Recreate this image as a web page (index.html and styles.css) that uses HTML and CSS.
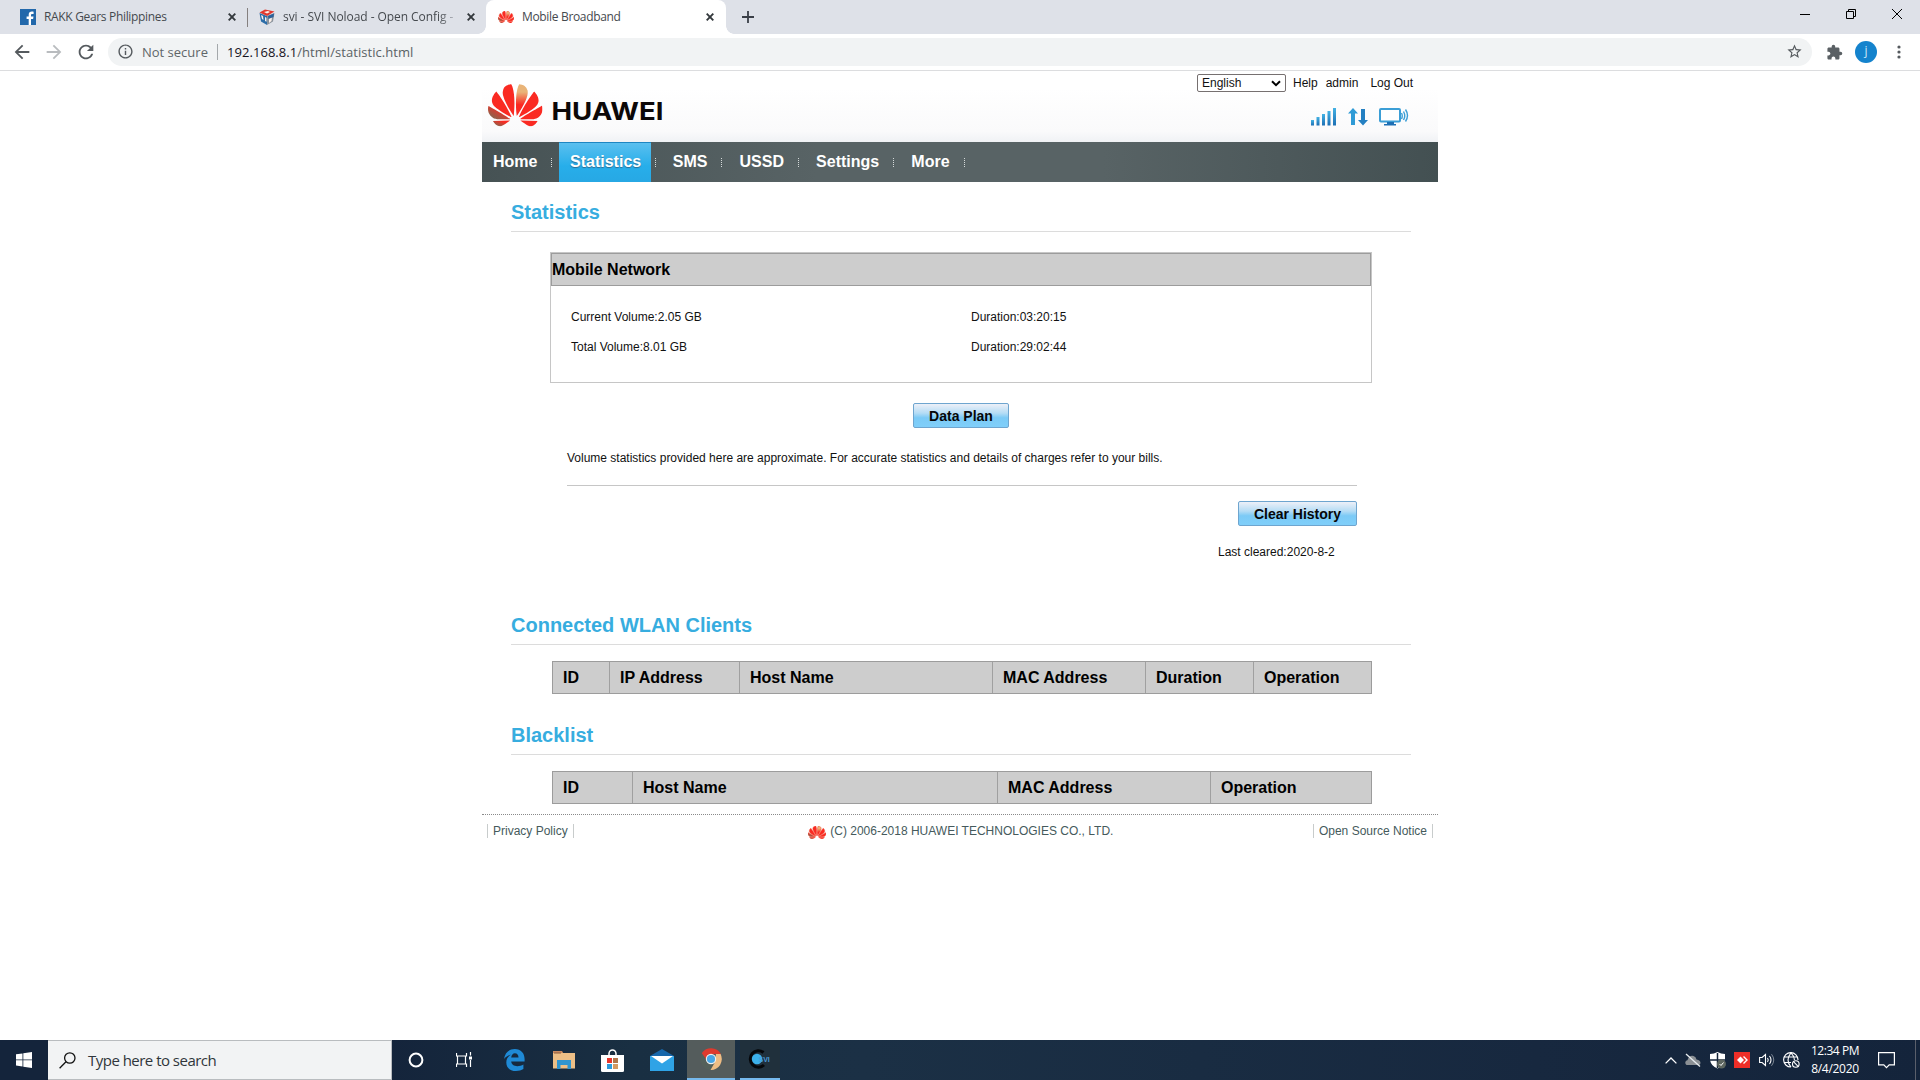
FILE: index.html
```html
<!DOCTYPE html>
<html lang="en">
<head>
<meta charset="utf-8">
<title>Mobile Broadband</title>
<link rel="stylesheet" href="styles.css">
</head>
<body>
<svg class="defs" width="0" height="0" aria-hidden="true">
  <defs>
    <linearGradient id="tan" x1="0" y1="0" x2="0" y2="1"><stop offset=".25" stop-color="#e9b478"/><stop offset=".65" stop-color="#fa2a22"/></linearGradient>
    <linearGradient id="brown" x1="0" y1="1" x2="1" y2="0"><stop offset=".2" stop-color="#93604a"/><stop offset=".7" stop-color="#fa2a22"/></linearGradient>
    <linearGradient id="blue" x1="0" y1="0" x2="0" y2="1"><stop offset="0" stop-color="#43b2e4"/><stop offset="1" stop-color="#1d6fb4"/></linearGradient>
    <symbol id="flower" viewBox="0 2.9 24 18.2" preserveAspectRatio="none">
      <g fill="#fa2a22">
        <path d="M3.67 6.14S1.82 7.91 1.72 9.78v.35c.08 1.51 1.22 2.4 1.22 2.4 1.83 1.79 6.26 4.04 7.3 4.55 0 0 .06.03.1-.01l.02-.04v-.04C7.52 10.8 3.67 6.14 3.67 6.14z"/>
        <path fill="url(#brown)" d="M9.65 18.6c-.02-.08-.1-.08-.1-.08l-7.38.26c.8 1.43 2.15 2.53 3.56 2.2.96-.25 3.16-1.78 3.88-2.3.06-.05.04-.09.04-.09z"/>
        <path fill="url(#brown)" d="M9.73 17.82C6.49 15.63.21 12.28.21 12.28c-.15.46-.2.9-.21 1.3v.07c0 1.07.4 1.82.4 1.82.8 1.69 2.34 2.2 2.34 2.2.7.3 1.4.31 1.4.31.12.02 4.4 0 5.54 0 .05 0 .08-.05.08-.05v-.06c0-.03-.03-.05-.03-.05z"/>
        <path d="M9.06 3.19a3.42 3.42 0 00-2.57 3.15v.41c.03.6.16 1.05.16 1.05.66 2.9 3.86 7.65 4.55 8.65.05.05.1.03.1.03a.1.1 0 00.06-.1c1.06-10.6-1.11-13.42-1.11-13.42-.32.02-1.19.23-1.19.23z"/>
        <path fill="url(#tan)" d="M17.36 5.46s-.49-1.8-2.44-2.28c0 0-.57-.14-1.17-.22 0 0-2.18 2.81-1.12 13.43.01.07.06.08.06.08.07.03.1-.03.1-.03.72-1.03 3.9-5.76 4.55-8.64 0 0 .36-1.4.02-2.34z"/>
        <path d="M14.44 18.53s-.07 0-.09.05c0 0-.01.07.03.1.7.51 2.85 2 3.88 2.3 0 0 .16.05.43.06h.14c.69-.02 1.9-.37 3-2.26l-7.4-.25z"/>
        <path d="M22.27 10.12c.14-2.06-1.94-3.97-1.94-3.98 0 0-3.85 4.66-6.67 10.8 0 0-.03.08.02.13l.04.01h.06c1.06-.53 5.46-2.77 7.28-4.54 0 0 1.15-.93 1.21-2.42z"/>
        <path d="M23.79 12.26s-6.28 3.37-9.52 5.55c0 0-.05.04-.03.11 0 0 .03.06.07.06 1.16 0 5.56 0 5.67-.02 0 0 .57-.02 1.27-.29 0 0 1.56-.5 2.37-2.27 0 0 .73-1.45.17-3.14z"/>
      </g>
    </symbol>
    <symbol id="close" viewBox="0 0 8 8"><path d="M.7.7l6.6 6.6M7.3.7L.7 7.3" stroke="#33383c" stroke-width="1.9"/></symbol>
  </defs>
</svg>

<div class="tabstrip">
  <div class="tab tab-first">
    <svg class="favicon" viewBox="0 0 16 16"><rect width="16" height="16" fill="#2268ab"/><path d="M11 16v-6h2.1l.4-2.4H11V6.2c0-.8.4-1.3 1.3-1.3h1.3V2.7c-.4-.1-1-.1-1.7-.1-2 0-3.2 1.1-3.2 3.2v1.8H6.6V10h2.1v6z" fill="#fff"/></svg>
    <span class="tab-title title-rakk">RAKK Gears Philippines</span>
    <svg class="tab-close"><use href="#close"/></svg>
  </div>
  <div class="tab tab-second">
    <svg class="favicon" viewBox="0 0 16 16"><path d="M.5 4L8 7v9l-6-3.500z" fill="#2c6da8"/><path d="M15.500 4L8 7v9l6-3.500z" fill="#8b939c"/><path d="M.5 3.500L6 .5l9.500 2L8 7z" fill="#e2382d"/><path d="M5 3l4-1 2 1-3 1.500zM2 6l2 1 .5 4L3 10zM6 8l1.500.8v4L6 12zM10 9l3-1-.5 4-2.500 2z" fill="#fbefe8"/><path d="M9 7l6-2.500-.5 3.500L9.500 10z" fill="#2c6099"/></svg>
    <span class="tab-title title-svi">svi - SVI Noload - Open Config -</span>
    <svg class="tab-close"><use href="#close"/></svg>
  </div>
  <div class="tab tab-active">
    <svg class="favicon fav-huawei small-flower"><use href="#flower"/></svg>
    <span class="tab-title title-mobile">Mobile Broadband</span>
    <svg class="tab-close"><use href="#close"/></svg>
  </div>
  <svg class="new-tab" viewBox="0 0 12 12"><path d="M6 0v12M0 6h12" stroke="#3a3f47" stroke-width="1.8"/></svg>
  <div class="window-controls">
    <svg viewBox="0 0 10 10"><path d="M0 5.500h10" stroke="#000"/></svg>
    <svg viewBox="0 0 10 10"><path d="M.5 2.500h7v7h-7zM2.500 2.500v-2h7v7h-2" fill="none" stroke="#000"/></svg>
    <svg viewBox="0 0 10 10"><path d="M0 0l10 10M10 0L0 10" stroke="#000"/></svg>
  </div>
</div>

<div class="toolbar">
  <svg class="nav-icon" viewBox="0 0 24 24"><path fill="#555a5e" d="M20 11H7.830l5.590-5.590L12 4l-8 8 8 8 1.410-1.410L7.830 13H20z"/></svg>
  <svg class="nav-icon" viewBox="0 0 24 24"><path fill="#b9bcbf" d="M4 11h12.170l-5.590-5.590L12 4l8 8-8 8-1.410-1.410L16.170 13H4z"/></svg>
  <svg class="nav-icon" viewBox="0 0 24 24"><path fill="#555a5e" d="M17.65 6.35C16.2 4.9 14.21 4 12 4c-4.42 0-7.99 3.58-7.99 8s3.57 8 7.99 8c3.73 0 6.84-2.55 7.73-6h-2.080c-.82 2.330-3.040 4-5.650 4-3.310 0-6-2.690-6-6s2.690-6 6-6c1.660 0 3.140.69 4.220 1.780L13 11h7V4l-2.350 2.350z"/></svg>
  <div class="omnibox">
    <svg class="info" viewBox="0 0 24 24"><path fill="#555a5e" d="M11 7h2v2h-2zm0 4h2v6h-2zm1-9C6.480 2 2 6.480 2 12s4.480 10 10 10 10-4.480 10-10S17.520 2 12 2zm0 18c-4.410 0-8-3.590-8-8s3.590-8 8-8 8 3.590 8 8-3.590 8-8 8z"/></svg>
    <span class="not-secure">Not secure</span>
    <span class="url"><span class="host">192.168.8.1</span>/html/statistic.html</span>
    <svg class="star" viewBox="0 0 24 24"><path fill="#555a5e" d="M22 9.240l-7.190-.62L12 2 9.190 8.630 2 9.240l5.460 4.730L5.820 21 12 17.270 18.180 21l-1.630-7.030L22 9.240zM12 15.400l-3.760 2.270 1-4.280-3.320-2.880 4.380-.38L12 6.100l1.710 4.040 4.380.38-3.320 2.880 1 4.280L12 15.400z"/></svg>
  </div>
  <svg class="puzzle" viewBox="0 0 24 24"><path fill="#5a6064" d="M20.500 11H19V7c0-1.100-.9-2-2-2h-4V3.500a2.500 2.500 0 0 0-5 0V5H4c-1.100 0-1.990.9-1.990 2v3.800H3.500c1.490 0 2.700 1.210 2.700 2.700s-1.210 2.700-2.700 2.700H2V20c0 1.100.9 2 2 2h3.800v-1.500c0-1.490 1.210-2.700 2.700-2.700 1.490 0 2.700 1.210 2.700 2.700V22H17c1.100 0 2-.9 2-2v-4h1.500a2.500 2.500 0 0 0 0-5z"/></svg>
  <span class="avatar">j</span>
  <svg class="kebab" viewBox="0 0 4 14"><g fill="#555a5e"><circle cx="2" cy="2" r="1.600"/><circle cx="2" cy="7" r="1.600"/><circle cx="2" cy="12" r="1.600"/></g></svg>
</div>

<main class="page">
  <header class="banner">
    <svg class="logo" viewBox="0 0 180 44">
      <use href="#flower" width="54.500" height="42.500"/>
      <text x="63.500" y="35.500" textLength="112" lengthAdjust="spacingAndGlyphs">HUAWEI</text>
    </svg>
    <div class="banner-right">
      <div class="top-links">
        <span class="lang">English<svg viewBox="0 0 10 7"><path d="M1 1.200l4 4 4-4" fill="none" stroke="#000" stroke-width="2"/></svg></span>
        <a class="help">Help</a><a class="admin">admin</a><a>Log Out</a>
      </div>
      <div class="status">
        <svg width="26" height="18" viewBox="0 0 26 18"><g fill="url(#blue)"><rect x="0" y="12" width="3" height="5.500"/><rect x="5.500" y="9" width="3" height="8.500"/><rect x="11" y="6" width="3" height="11.500"/><rect x="16.500" y="3" width="3" height="14.500"/><rect x="22" y="0" width="3" height="17.500"/></g></svg>
        <svg width="20" height="18" viewBox="0 0 20 18"><path fill="#2f9bd6" d="M5 0l5 5.500H7V17H3V5.500H0z"/><path fill="#2480c2" d="M15 17.500l-5-5.500h3V1h4v11h3z"/></svg>
        <svg width="30" height="18" viewBox="0 0 30 18"><rect x="1" y="1" width="20" height="12.500" rx="1" fill="#fff" stroke="#3b9ed6" stroke-width="2"/><path d="M8 14h7v2H8zM5 16h12v1.600H5z" fill="#1d6fb4"/><path d="M22.500 5q1.500 3 0 6M24.500 3.500q2.500 4.500 0 8.500M26.500 1.500q4 6 0 12" fill="none" stroke="#3b9ed6" stroke-width="1.400"/></svg>
      </div>
    </div>
  </header>

  <nav class="menu">
    <a>Home</a><i></i><a class="current">Statistics</a><i></i><a>SMS</a><i></i><a>USSD</a><i></i><a>Settings</a><i></i><a>More</a><i></i>
  </nav>

  <section class="section">
    <h2>Statistics</h2>
    <div class="panel">
      <h3>Mobile Network</h3>
      <div class="volumes">
        <span>Current Volume:2.05 GB</span><span>Duration:03:20:15</span>
        <span>Total Volume:8.01 GB</span><span>Duration:29:02:44</span>
      </div>
    </div>
    <div class="plan"><button class="btn btn-plan">Data Plan</button></div>
    <p class="note">Volume statistics provided here are approximate. For accurate statistics and details of charges refer to your bills.</p>
    <div class="clear"><button class="btn btn-clear">Clear History</button></div>
    <p class="cleared">Last cleared:2020-8-2</p>
  </section>

  <section class="section clients">
    <h2>Connected WLAN Clients</h2>
    <div class="thead thead-clients"><b>ID</b><b>IP Address</b><b>Host Name</b><b>MAC Address</b><b>Duration</b><b>Operation</b></div>
  </section>

  <section class="section blacklist">
    <h2>Blacklist</h2>
    <div class="thead thead-blacklist"><b>ID</b><b>Host Name</b><b>MAC Address</b><b>Operation</b></div>
  </section>

  <footer class="footer">
    <a class="foot-link">Privacy Policy</a>
    <span class="copyright"><svg class="small-flower"><use href="#flower"/></svg>(C) 2006-2018 HUAWEI TECHNOLOGIES CO., LTD.</span>
    <a class="foot-link">Open Source Notice</a>
  </footer>
</main>

<div class="taskbar">
  <div class="start"><svg width="16" height="16" viewBox="0 0 16 16"><path fill="#fff" d="M0 2.300L6.500 1.400v6.100H0zM7.300 1.300L16 0v7.500H7.300zM0 8.300h6.500v6.200L0 13.600zM7.300 8.300H16V16l-8.700-1.300z"/></svg></div>
  <div class="search">
    <svg width="17" height="17" viewBox="0 0 17 17"><circle cx="10.800" cy="6" r="5.200" fill="none" stroke="#111" stroke-width="1.300"/><path d="M7 9.800L.6 16.200" stroke="#111" stroke-width="1.300"/></svg>
    <span>Type here to search</span>
  </div>
  <div class="task"><svg width="16" height="16" viewBox="0 0 16 16"><circle cx="8" cy="8" r="6.400" fill="none" stroke="#fff" stroke-width="2"/></svg></div>
  <div class="task"><svg width="17" height="16" viewBox="0 0 17 16"><path d="M.5 1v3h10V1M.5 15v-3h10v3M1.500 4v8M9.500 4v8M14.500 0v3.500M14.500 8v7" fill="none" stroke="#fff" stroke-width="1.200"/><rect x="13" y="4.500" width="3" height="3" fill="#fff"/></svg></div>
  <div class="task app edge"><svg width="21" height="22" viewBox="0 0 21 22"><path fill="#1f8ad6" d="M0 10C1 3.500 5.500 0 10.800 0 17 0 20.600 4.400 20.600 10v2.600H7.200c.2 3.200 2.900 4.600 6 4.600 2.500 0 4.400-.7 6.200-1.700v4.600C17.400 21.300 15 22 12 22 6.300 22 2.300 18.700 2.300 13.400c0-3.300 1.700-6 4.600-7.600C4.400 6.300 1.800 7.500 0 10zm7.200-1.500h7.300c0-2.700-1.300-4.300-3.600-4.300-2 0-3.400 1.700-3.700 4.300z"/></svg></div>
  <div class="task app"><svg width="22" height="18" viewBox="0 0 22 18"><path fill="#c98a60" d="M0 0h9l1.500 2.500H0z"/><path fill="#edbf86" d="M0 2h22v15.500H0z"/><path fill="#2f95d0" d="M4 9h14v9h-3.500v-4h-7v4H4z"/><path fill="#8a5a3a" d="M1 1.500h7v1H1z"/></svg></div>
  <div class="task app"><svg width="23" height="23" viewBox="0 0 23 23"><path d="M8 7V4.500a3.500 3.500 0 0 1 7 0V7" fill="none" stroke="#fff" stroke-width="1.500"/><path d="M0 6h23v15.500q0 1.500-1.500 1.500h-20Q0 23 0 21.500z" fill="#fff"/><path fill="#e8352b" d="M6 9h5v5H6z"/><path fill="#b0764a" d="M12 9h5v5h-5z"/><path fill="#2d9bdc" d="M6 15h5v5H6z"/><path fill="#d59a62" d="M12 15h5v5h-5z"/></svg></div>
  <div class="task app"><svg width="24" height="22" viewBox="0 0 24 22"><path fill="#1767ab" d="M0 7l12-7 12 7v5H0z"/><path fill="#2fa3e6" d="M0 7h24v15H0z"/><path fill="#fff" d="M1 7h22l-11 7.500z"/></svg></div>
  <div class="task chrome"><svg width="22" height="22" viewBox="0 0 22 22"><path fill="#54605a" d="M2 5a11 11 0 0 0 8.500 17L14 15z"/><path fill="#efbd84" d="M20.600 6A11 11 0 0 1 10.500 22l4-7L16 6z"/><path fill="#de3a2e" d="M1.800 5.200a11 11 0 0 1 19 .8H11L6 11z"/><circle cx="11" cy="11" r="5.200" fill="#f4f1ec"/><circle cx="11" cy="11" r="4.100" fill="#48a6e6"/></svg></div>
  <div class="task svi"><svg width="25" height="20" viewBox="0 0 25 20"><path d="M15.500 3.500A8.200 8.200 0 1 0 16 16" fill="none" stroke="#05070a" stroke-width="3"/><circle cx="9" cy="10" r="5.200" fill="#3bb0ea"/><text x="10.500" y="12.500">SVI</text></svg></div>
  <div class="tray">
    <svg width="12" height="7" viewBox="0 0 12 7"><path d="M.6 6.400L6 1l5.400 5.400" fill="none" stroke="#fff" stroke-width="1.300"/></svg>
    <svg width="16" height="14" viewBox="0 0 16 14"><path d="M1.500 12q-2.500-2.500 0-4.500 1 0 1.500-1.500 1.500-4 5.500-3 2.500.5 3 3.500 4 .5 4 3.500 0 2-2 2z" fill="#8b9095"/><path d="M1 1l14 12.500" stroke="#e9edf0" stroke-width="1.300"/></svg>
    <svg width="16" height="17" viewBox="0 0 16 17"><path d="M7.500 0Q11 2 15 2v6q-1 6-7.500 8.500Q1 14 0 8V2q4 0 7.500-2z" fill="#fff"/><path d="M7.500 1v15M0 8h15" stroke="#14243a" stroke-width="1.500"/><circle cx="11.500" cy="12" r="4.500" fill="#5d665f"/><path d="M9.500 12l1.500 1.500 2.500-3" fill="none" stroke="#fff"/></svg>
    <svg width="16" height="16" viewBox="0 0 16 16"><rect width="16" height="16" fill="#ee2e28"/><path d="M3 8l3.500-3.500L10 8l-3.500 3.500z" fill="#fff"/><path d="M9.500 4.500L13 8l-3.500 3.500" fill="none" stroke="#fff" stroke-width="1.400"/></svg>
    <svg width="16" height="14" viewBox="0 0 16 14"><path d="M.6 4.500h2.500L6.500 1.500v11L3.100 9.500H.6z" fill="none" stroke="#fff" stroke-width="1.100"/><path d="M8.500 5q1.500 2 0 4M10.500 3q3 4 0 8" fill="none" stroke="#fff" stroke-width="1.100"/><path d="M12.500 1.200q4.500 5.800 0 11.600" fill="none" stroke="#7f8996"/></svg>
    <svg width="17" height="16" viewBox="0 0 17 16"><g fill="none" stroke="#fff" stroke-width="1.100"><path d="M8 15A7.200 7.200 0 1 1 15 8M8 15Q2 8 8 .8q3.500 3.500 3.400 7.200M1.500 5h13M1 10.500h7"/><circle cx="12.800" cy="12" r="3.300"/><path d="M10.500 9.700l4.600 4.600"/></g></svg>
  </div>
  <div class="clock"><span>12:34 PM</span><span class="date">8/4/2020</span></div>
  <svg class="action" width="17" height="17" viewBox="0 0 17 17"><path d="M.6.6h15.800v12.300h-5.200L8.500 15.700l-2.700-2.800H.6z" fill="none" stroke="#fff" stroke-width="1.200"/></svg>
  <i class="show-desktop"></i>
</div>
</body>
</html>
```

FILE: styles.css
```css
* { box-sizing: border-box; }

body {
  margin: 0;
  width: 1920px;
  height: 1080px;
  overflow: hidden;
  display: flex;
  flex-direction: column;
  background: #fff;
  color: #111;
  font: 12px/14px "Liberation Sans", Arial, sans-serif;
}

h2, h3, p { margin: 0; }
svg { display: block; flex: none; }
.defs { position: absolute; }

/* Browser tabs */
.tabstrip {
  height: 34px;
  flex: none;
  display: flex;
  align-items: stretch;
  background: #dee1e8;
  font: 12px/16px "Open Sans", "Noto Sans", sans-serif;
  color: #45494e;
}

.tab {
  display: flex;
  align-items: center;
}

.tab-first { width: 247px; padding: 0 11px 0 20px; }
.tab-second { width: 239px; padding: 0 11px 0 12px; position: relative; }
.tab-second::before {
  content: "";
  position: absolute;
  left: 0;
  top: 8px;
  width: 1px;
  height: 19px;
  background: #85807f;
}
.tab-active {
  width: 240px;
  padding: 0 12px;
  background: #fff;
  border-radius: 8px 8px 0 0;
  position: relative;
}
.tab-active::before,
.tab-active::after {
  content: "";
  position: absolute;
  bottom: 0;
  width: 8px;
  height: 8px;
}
.tab-active::before { left: -8px; background: radial-gradient(circle at 0 0, transparent 7.5px, #fff 8px); }
.tab-active::after { right: -8px; background: radial-gradient(circle at 100% 0, transparent 7.5px, #fff 8px); }

.favicon { width: 16px; height: 16px; margin-right: 8px; }
.fav-huawei { height: 12px; }
.small-flower { stroke: #f4503a; stroke-width: .7px; }
.tab-title { flex: 1; white-space: nowrap; overflow: hidden; }
.title-rakk { letter-spacing: -.33px; }
.title-svi {
  letter-spacing: -.06px;
  -webkit-mask-image: linear-gradient(90deg, #000 155px, transparent 178px);
  mask-image: linear-gradient(90deg, #000 155px, transparent 178px);
}
.title-mobile { letter-spacing: -.33px; }
.tab-close { width: 8px; height: 8px; }
.new-tab { width: 12px; height: 12px; margin: 11px 0 0 16px; }

.window-controls {
  margin-left: auto;
  display: flex;
  gap: 36px;
  padding: 9px 18px 0 0;
}
.window-controls svg { width: 10px; height: 10px; }

/* Address bar row */
.toolbar {
  height: 37px;
  flex: none;
  display: flex;
  align-items: center;
  padding-left: 11px;
  border-bottom: 1px solid #dcdddf;
  font-family: "Open Sans", "Noto Sans", sans-serif;
}
.nav-icon { width: 22px; height: 22px; margin-right: 10px; }
.omnibox {
  width: 1704px;
  height: 28px;
  margin-left: 1px;
  padding: 0 9px 1px;
  border-radius: 14px;
  background: #f1f3f4;
  display: flex;
  align-items: center;
  font-size: 14px;
  line-height: 18px;
}
.info { width: 17px; height: 17px; }
.not-secure {
  width: 84px;
  padding-left: 8px;
  border-right: 1px solid #a4a8ab;
  line-height: 16px;
  color: #5f6669;
  font-size: 13px;
  white-space: nowrap;
}
.url { padding-left: 9px; color: #5a6265; font-size: 13px; letter-spacing: .05px; }
.host { color: #16121c; }
.star { width: 17px; height: 17px; margin-left: auto; }
.puzzle { width: 17px; height: 17px; margin-left: 14px; }
.avatar {
  width: 22px;
  height: 22px;
  margin-left: 12px;
  border-radius: 50%;
  background: #1483cd;
  color: #cfe8f8;
  font-size: 12px;
  line-height: 20px;
  text-align: center;
}
.kebab { width: 4px; height: 14px; margin-left: 20px; }

/* Router page */
.page {
  width: 956px;
  flex: 1;
  margin-left: 482px;
}
.banner {
  height: 71px;
  display: flex;
  justify-content: space-between;
  background: linear-gradient(#fff 25%, #fafafb 85%, #f0f2f5);
}
.logo { width: 180px; height: 44px; margin: 13px 0 0 6px; }
.logo text { font: 700 24.500px "Inter", "Liberation Sans", sans-serif; fill: #0c0808; }
.banner-right { width: 241px; padding-top: 3px; }
.top-links { display: flex; align-items: center; color: #111; }
.lang {
  width: 89px;
  height: 18px;
  padding: 0 4px;
  border: 1px solid #767070;
  border-radius: 2px;
  background: #fff;
  display: flex;
  align-items: center;
  justify-content: space-between;
}
.lang svg { width: 10px; height: 7px; }
.help { margin-left: 7px; }
.admin { margin: 0 12px 0 8px; }
.status { display: flex; gap: 11px; padding: 16px 0 0 114px; }

.menu {
  height: 40px;
  display: flex;
  align-items: stretch;
  background: linear-gradient(90deg, #465254, #586365 35%, #586365 65%, #435052);
  color: #fff;
  font: bold 16px/39px "Liberation Sans", Arial, sans-serif;
}
.menu a { padding: 0 11px; }
.menu .current {
  padding-right: 10px;
  background: linear-gradient(#5cc0ef, #27aeea 60%, #27a8e4);
  box-shadow: inset 0 1px #1d86c2;
  text-shadow: 0 1px 1px #2b6d92;
}
.menu i {
  width: 10.100px;
  display: flex;
  padding: 16px 0 0 3px;
}
.menu i:first-of-type { width: 10.600px; }
.menu .current + i { width: 10.600px; padding-left: 4px; }
.menu i::before {
  content: "";
  height: 9px;
  border-left: 1px dotted #d5dada;
}

.section { width: 900px; margin-left: 29px; }
.section h2 {
  height: 50px;
  padding-top: 18px;
  border-bottom: 1px solid #dcdcdc;
  color: #37addf;
  font-size: 20px;
  line-height: 24px;
}

.panel {
  width: 822px;
  height: 131px;
  margin: 20px 0 0 39px;
  border: 1px solid #c6c6c6;
}
.panel h3 {
  height: 33px;
  border: 1px solid #9c9c9c;
  background: #cdcdcd;
  color: #000;
  font-size: 16px;
  line-height: 31px;
}
.volumes {
  display: grid;
  grid-template-columns: 400px 1fr;
  row-gap: 16px;
  padding: 24px 0 0 20px;
}

.btn {
  height: 25px;
  padding: 0;
  border: 1px solid #6ea5cf;
  border-radius: 2px;
  background: linear-gradient(#edf0f8, #b4dcf5 40%, #7bcaf6 60%, #80cffa);
  color: #060608;
  font: bold 14px/22px "Liberation Sans", Arial, sans-serif;
}
.btn-plan { width: 96px; }
.btn-clear { width: 119px; }
.plan { padding: 20px 0 0 402px; height: 45px; }
.note {
  width: 790px;
  height: 58px;
  margin-left: 56px;
  padding-top: 23px;
  border-bottom: 1px solid #c6c6c6;
}
.clear { display: flex; justify-content: flex-end; padding: 15px 54px 0 0; }
.cleared { padding: 19px 0 0 707px; height: 69px; }

.clients { height: 99px; }
.clients h2, .blacklist h2 { padding-top: 18px; }
.blacklist { height: 120px; }
.blacklist h2 { height: 61px; padding-top: 29px; }

.thead {
  width: 820px;
  height: 33px;
  margin: 16px 0 0 41px;
  display: grid;
  border: 1px solid #9c9c9c;
  background: #cdcdcd;
  color: #000;
  font-size: 16px;
  line-height: 31px;
}
.thead b { padding-left: 10px; }
.thead b + b { border-left: 1px solid #a0a0a0; }
.thead-clients { grid-template-columns: 56px 130px 253px 153px 108px 1fr; }
.thead-blacklist { grid-template-columns: 79px 365px 213px 1fr; }

.footer {
  display: flex;
  justify-content: space-between;
  align-items: flex-start;
  padding: 9px 5px 0;
  border-top: 1px dotted #8a8a8a;
  color: #455a5c;
}
.foot-link { padding: 0 5px; border: solid #c8cccc; border-width: 0 1px; }
.copyright { display: flex; gap: 4px; margin-left: 35px; }
.copyright svg { width: 18px; height: 13px; margin-top: 2px; }

/* Windows taskbar */
.taskbar {
  height: 40px;
  flex: none;
  display: flex;
  align-items: center;
  background: linear-gradient(90deg, #14243b, #14243b 20%, #192f42 33%, #1b3045 45%, #17283f 80%, #14243b);
  color: #fff;
  font-family: "Open Sans", "Noto Sans", sans-serif;
}
.start { width: 48px; display: flex; justify-content: center; }
.search {
  width: 344px;
  height: 40px;
  padding-left: 11px;
  display: flex;
  align-items: center;
  gap: 12px;
  border: 1px solid #b9bcbf;
  border-left: 0;
  background: #f2f3f4;
  color: #30363b;
  font-size: 15px;
  letter-spacing: -.52px;
}
.task { width: 48px; height: 40px; display: flex; align-items: center; justify-content: center; }
.app { width: 49px; }
.edge { margin-left: 2px; }
.chrome { margin-left: 1px; background: #545c5c; border-bottom: 2px solid #76b9ed; }
.svi { width: 40px; margin-left: 5px; border-bottom: 2px solid #76b9ed; background: #20303c; }
.svi text { font: bold 7px "Liberation Sans", sans-serif; fill: #4a9ad8; }
.tray { margin-left: auto; width: 135px; display: flex; align-items: center; justify-content: space-between; }
.clock {
  width: 70px;
  display: flex;
  flex-direction: column;
  align-items: center;
  font-size: 12px;
  line-height: 18px;
  letter-spacing: -.45px;
}
.clock .date { letter-spacing: -.3px; }
.action { margin-left: 8px; }
.show-desktop { width: 1px; height: 40px; margin: 0 4px 0 20px; background: #5a5f6b; }
```
